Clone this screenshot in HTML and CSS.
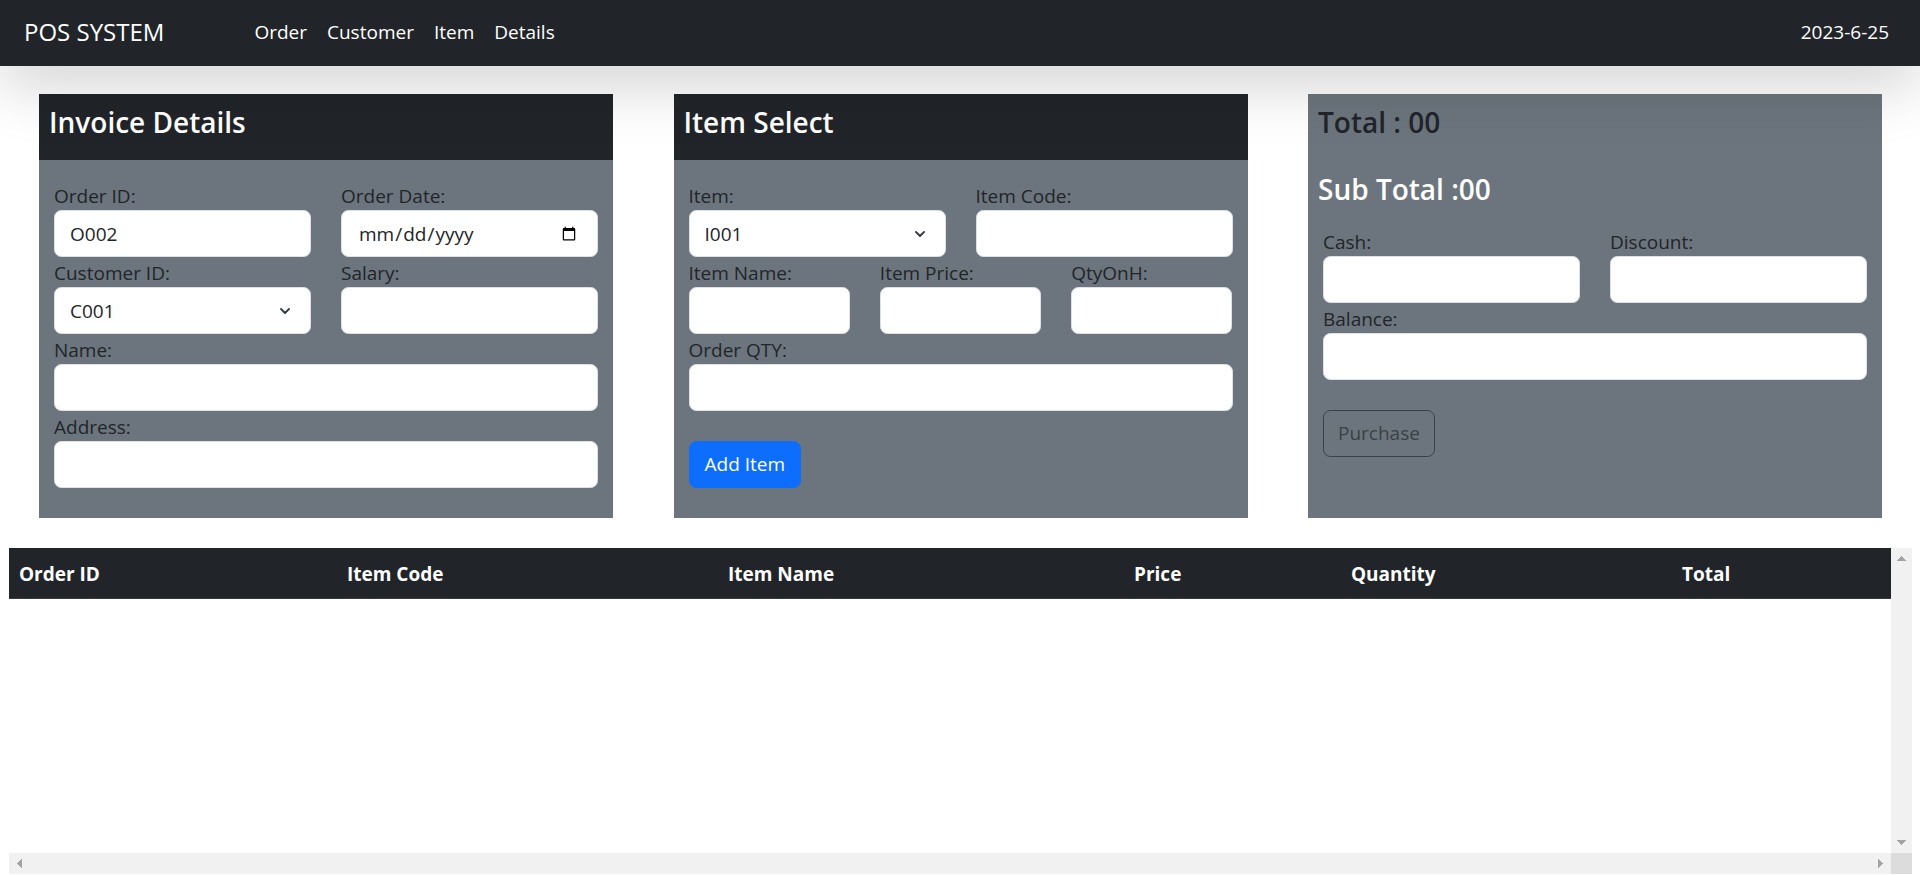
FILE: index.html
```html
<!DOCTYPE html>
<html lang="en">
<head>
<meta charset="utf-8">
<title>POS SYSTEM</title>
<link rel="stylesheet" href="styles.css">
</head>
<body>
<header class="navbar">
  <span class="brand">POS SYSTEM</span>
  <nav class="nav">
    <a class="nav-link" href="#">Order</a>
    <a class="nav-link" href="#">Customer</a>
    <a class="nav-link" href="#">Item</a>
    <a class="nav-link" href="#">Details</a>
  </nav>
  <span class="nav-date">2023-6-25</span>
</header>

<main class="cards">
  <section class="card">
    <div class="card-header"><h4 class="card-title">Invoice Details</h4></div>
    <div class="card-body">
      <div class="grid-2">
        <div class="field">
          <label class="label">Order ID:</label>
          <input class="input" type="text" value="O002">
        </div>
        <div class="field">
          <label class="label">Order Date:</label>
          <input class="input date-input" type="date">
        </div>
        <div class="field">
          <label class="label">Customer ID:</label>
          <div class="select-wrap">
            <select class="input select"><option>C001</option></select>
            <svg class="chevron" viewBox="0 0 10 6" width="10" height="6"><path d="M1 1l4 4 4-4" fill="none" stroke="#343a40" stroke-width="1.8" stroke-linecap="round" stroke-linejoin="round"/></svg>
          </div>
        </div>
        <div class="field">
          <label class="label">Salary:</label>
          <input class="input" type="text">
        </div>
        <div class="field span-2">
          <label class="label">Name:</label>
          <input class="input" type="text">
        </div>
        <div class="field span-2">
          <label class="label">Address:</label>
          <input class="input" type="text">
        </div>
      </div>
    </div>
  </section>

  <section class="card">
    <div class="card-header"><h4 class="card-title">Item Select</h4></div>
    <div class="card-body">
      <div class="grid-2">
        <div class="field">
          <label class="label">Item:</label>
          <div class="select-wrap">
            <select class="input select"><option>I001</option></select>
            <svg class="chevron" viewBox="0 0 10 6" width="10" height="6"><path d="M1 1l4 4 4-4" fill="none" stroke="#343a40" stroke-width="1.8" stroke-linecap="round" stroke-linejoin="round"/></svg>
          </div>
        </div>
        <div class="field">
          <label class="label">Item Code:</label>
          <input class="input" type="text">
        </div>
      </div>
      <div class="grid-3">
        <div class="field">
          <label class="label">Item Name:</label>
          <input class="input" type="text">
        </div>
        <div class="field">
          <label class="label">Item Price:</label>
          <input class="input" type="text">
        </div>
        <div class="field">
          <label class="label">QtyOnH:</label>
          <input class="input" type="text">
        </div>
      </div>
      <div class="field">
        <label class="label">Order QTY:</label>
        <input class="input" type="text">
      </div>
      <div class="actions">
        <button class="btn btn-primary" type="button">Add Item</button>
      </div>
    </div>
  </section>

  <section class="card">
    <div class="summary">
      <h4 class="sum-total">Total : 00</h4>
      <h4 class="sum-sub">Sub Total :00</h4>
      <div class="summary-form">
        <div class="grid-2">
          <div class="field">
            <label class="label">Cash:</label>
            <input class="input" type="text">
          </div>
          <div class="field">
            <label class="label">Discount:</label>
            <input class="input" type="text">
          </div>
          <div class="field span-2">
            <label class="label">Balance:</label>
            <input class="input" type="text">
          </div>
        </div>
        <div class="actions">
          <button class="btn btn-outline" type="button" disabled>Purchase</button>
        </div>
      </div>
    </div>
  </section>
</main>

<div class="table-wrap">
  <div class="table-view">
    <table class="order-table">
      <colgroup>
        <col class="c-order"><col class="c-code"><col class="c-name"><col class="c-price"><col class="c-qty"><col class="c-total">
      </colgroup>
      <thead>
        <tr>
          <th>Order ID</th>
          <th>Item Code</th>
          <th>Item Name</th>
          <th>Price</th>
          <th>Quantity</th>
          <th>Total</th>
        </tr>
      </thead>
      <tbody></tbody>
    </table>
  </div>
  <div class="vscroll">
    <span class="sb-btn arrow-up"></span>
    <span class="sb-btn arrow-down"></span>
  </div>
  <div class="hscroll">
    <span class="sb-btn arrow-left"></span>
    <span class="sb-btn arrow-right"></span>
  </div>
  <div class="sb-corner"></div>
</div>
</body>
</html>
```
FILE: styles.css
```css
* { box-sizing: border-box; }

html, body {
  margin: 0;
  padding: 0;
  height: 875px;
  overflow: hidden;
}

body {
  font-family: "Open Sans", "Noto Sans", "Liberation Sans", sans-serif;
  font-size: 19px;
  line-height: 30px;
  color: #212529;
  background: #fff;
}

/* Navbar */
.navbar {
  position: relative;
  z-index: 10;
  height: 66px;
  background: #212529;
  display: flex;
  align-items: center;
  padding: 0 31px 2px 24px;
  box-shadow: 0 20px 60px rgba(0, 0, 0, 0.175);
}

.brand {
  color: #fff;
  font-size: 24px;
  line-height: 36px;
}

.nav {
  display: flex;
  margin-left: 80px;
}

.nav-link {
  color: #fff;
  text-decoration: none;
  padding: 0 10px;
  font-size: 19px;
  line-height: 30px;
}

.nav-date {
  margin-left: auto;
  color: #fff;
  font-size: 19px;
  line-height: 30px;
}

/* Cards */
.cards {
  display: flex;
  gap: 60.5px;
  padding: 0 38px 0 39px;
  margin-top: 28px;
}

.card {
  flex: 1 1 0;
  min-width: 0;
  background: #6c757d;
}

.card-header {
  background: #212529;
  padding: 10px;
}

.card-title {
  margin: 0 0 10px;
  color: #fff;
  font-size: 28px;
  line-height: 36px;
  font-weight: 600;
}

.card-body {
  padding: 20px 15px 30px;
}

.grid-2 {
  display: grid;
  grid-template-columns: 1fr 1fr;
  column-gap: 30px;
}

.grid-3 {
  display: grid;
  grid-template-columns: 1fr 1fr 1fr;
  column-gap: 30px;
}

.span-2 { grid-column: span 2; }

.field { min-width: 0; }

.label {
  display: block;
  height: 30px;
  padding-top: 1px;
  line-height: 30px;
  color: #212529;
}

.input {
  display: block;
  width: 100%;
  height: 47px;
  margin: 0;
  padding: 0 15px;
  font-family: inherit;
  font-size: 19px;
  color: #212529;
  background: #fff;
  border: 1px solid #dee2e6;
  border-radius: 7.5px;
  outline: none;
}

.select {
  appearance: none;
  -webkit-appearance: none;
  padding-left: 15px;
  padding-right: 40px;
}

.select-wrap { position: relative; }

.chevron {
  position: absolute;
  right: 21px;
  top: 21px;
  pointer-events: none;
}

.date-input {
  padding-left: 16px;
  padding-right: 20px;
}

.date-input::-webkit-calendar-picker-indicator {
  width: 16px;
  height: 16px;
  margin: 0;
  padding: 0;
}

.actions {
  padding-top: 30px;
}

.btn {
  display: inline-block;
  height: 47px;
  padding: 0 15px;
  font-family: inherit;
  font-size: 19px;
  line-height: 45px;
  border-radius: 7.5px;
  border: 1px solid transparent;
}

.btn-primary {
  background: #0d6efd;
  border-color: #0d6efd;
  color: #fff;
}

.btn-outline {
  background: transparent;
  border-color: #212529;
  color: #212529;
  opacity: 0.65;
  padding: 0 14px;
}

/* Summary card */
.summary {
  padding: 10px 10px 0;
}

.sum-total,
.sum-sub {
  margin: 0;
  font-size: 28px;
  line-height: 36px;
  font-weight: 600;
}

.sum-total {
  color: #212529;
  margin-bottom: 31px;
}

.sum-sub {
  color: #fff;
  margin-bottom: 19px;
}

.summary-form {
  padding: 0 5px;
}

/* Table with scrollbars */
.table-wrap {
  margin: 30px 8px 0 9px;
  height: 326px;
  display: grid;
  grid-template-columns: 1fr 21px;
  grid-template-rows: 1fr 21px;
  background: #fff;
}

.table-view {
  overflow: hidden;
  min-width: 0;
}

.order-table {
  width: 100%;
  table-layout: fixed;
  border-collapse: collapse;
}

.c-order { width: 328px; }
.c-code { width: 381px; }
.c-name { width: 406px; }
.c-price { width: 217px; }
.c-qty { width: 331px; }
.c-total { width: 219px; }

.order-table th {
  background: #212529;
  color: #fff;
  text-align: left;
  font-weight: 700;
  font-size: 19px;
  line-height: 30px;
  padding: 11px 10px 9px;
  border-bottom: 1px solid #373b3e;
  white-space: nowrap;
}

.vscroll,
.hscroll {
  background: #f1f1f1;
  display: flex;
  justify-content: space-between;
}

.vscroll { flex-direction: column; }

.sb-corner { background: #dcdcdc; }

.sb-btn {
  display: block;
  width: 21px;
  height: 21px;
  background-repeat: no-repeat;
  background-position: center;
}

.arrow-up {
  background-size: 9px 5px;
  background-image: conic-gradient(from 138deg at 50% 0, #a3a3a3 84deg, transparent 0);
}

.arrow-down {
  background-size: 9px 5px;
  background-image: conic-gradient(from -42deg at 50% 100%, #a3a3a3 84deg, transparent 0);
}

.arrow-left {
  background-size: 5px 9px;
  background-image: conic-gradient(from 48deg at 0 50%, #a3a3a3 84deg, transparent 0);
}

.arrow-right {
  background-size: 5px 9px;
  background-image: conic-gradient(from 228deg at 100% 50%, #a3a3a3 84deg, transparent 0);
}
```
